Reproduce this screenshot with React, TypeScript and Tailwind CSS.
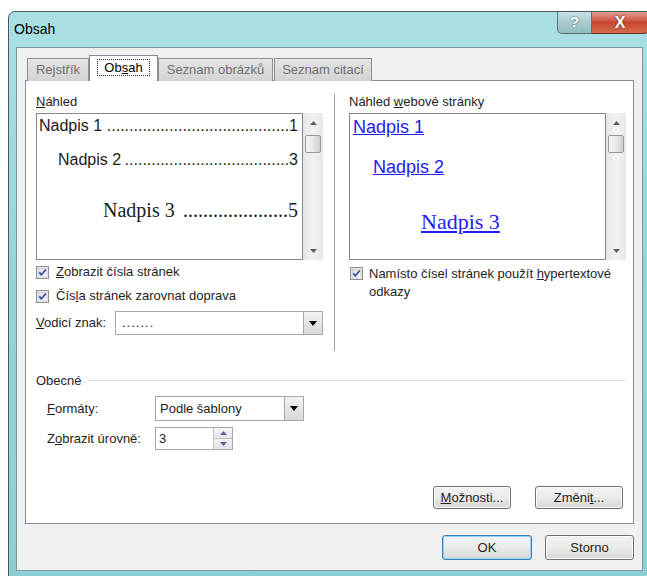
import type { ReactNode } from "react";

function Checkbox() {
  return (
    <svg width="13" height="13" viewBox="0 0 13 13" className="shrink-0">
      <defs>
        <linearGradient id="cbFill" x1="0" y1="0" x2="1" y2="1">
          <stop offset="0" stopColor="#dcdcdc" />
          <stop offset="1" stopColor="#fbfbfb" />
        </linearGradient>
      </defs>
      <rect x="0.5" y="0.5" width="12" height="12" fill="#f4f4f4" stroke="#8e8f8f" />
      <rect x="2" y="2" width="9" height="9" fill="url(#cbFill)" stroke="#b9bcc0" strokeWidth="0.6" />
      <path d="M3.3 6.4 L5.4 8.8 L9.8 3.4" fill="none" stroke="#2f47a0" strokeWidth="1.6" />
    </svg>
  );
}

function DropButton() {
  return (
    <div className="flex h-full w-[19px] items-center justify-center border-l border-[#a7a7a7] bg-gradient-to-b from-[#f3f3f3] to-[#d9d9d9]">
      <svg width="8" height="5" viewBox="0 0 8 5">
        <path d="M0 0 H8 L4 5 Z" fill="#000" />
      </svg>
    </div>
  );
}

function Arrow({ up }: { up?: boolean }) {
  return (
    <svg width="7" height="4" viewBox="0 0 7 4">
      <path d={up ? "M0 4 H7 L3.5 0 Z" : "M0 0 H7 L3.5 4 Z"} fill="#606060" />
    </svg>
  );
}

function ScrollBar() {
  return (
    <div className="flex w-[20px] flex-col items-center bg-gradient-to-r from-[#e6e6e6] via-[#f2f2f2] to-[#e8e8e8]">
      <div className="flex h-[20px] items-center justify-center">
        <Arrow up />
      </div>
      <div className="mt-[2px] h-[18px] w-[16px] rounded-[2px] border border-[#9a9a9a] bg-gradient-to-r from-[#f4f4f4] via-[#e8e8e8] to-[#cfcfcf]" />
      <div className="mt-auto flex h-[18px] items-center justify-center">
        <Arrow />
      </div>
    </div>
  );
}

// one line of the table of contents preview: title, dot leader, page number
function TocRow({ label, page, dots, className }: { label: string; page: string; dots: number; className: string }) {
  return (
    <div className={`flex items-baseline justify-between whitespace-nowrap text-[#1b1b1b] ${className}`}>
      <span>{label}</span>
      <span className="flex-1 text-right">{".".repeat(dots)}</span>
      <span>{page}</span>
    </div>
  );
}

function Button({ children, focused, className }: { children: ReactNode; focused?: boolean; className: string }) {
  return (
    <div
      className={`flex items-center justify-center rounded-[3px] border bg-gradient-to-b from-[#f2f2f2] via-[#ebebeb] to-[#d6d6d6] text-[13px] ${
        focused ? "border-[#3c7fb1] shadow-[inset_0_0_0_1px_#8ed4f5]" : "border-[#707070] shadow-[inset_0_0_0_1px_#fcfcfc]"
      } ${className}`}
    >
      {children}
    </div>
  );
}

export default function App() {
  return (
    <div className="h-[576px] w-[647px] overflow-hidden bg-white pl-[8px] pt-[11px] font-['Liberation_Sans',Arial,sans-serif] text-[13px] text-[#1e1e1e]">
      {/* window frame */}
      <div className="h-[566px] w-[648px] rounded-t-[7px] border border-[#475861] bg-gradient-to-b from-[#a9e0e3] via-[#93d4d8] to-[#8ccfd3]">
        {/* title bar */}
        <div className="flex h-[35px] items-start">
          <div className="pl-[5px] pt-[9px] text-[14px] leading-[16px] text-black">Obsah</div>
          <div className="ml-auto mr-[6px] flex h-[22px]">
            <div className="flex w-[35px] items-center justify-center rounded-bl-[5px] border border-t-0 border-[#5b7178] bg-gradient-to-b from-[#c6e2e4] via-[#a9cccf] to-[#8fbcc0] text-[15px] font-bold text-white [text-shadow:0_0_2px_#39494f]">
              ?
            </div>
            <div className="flex w-[57px] items-center justify-center rounded-br-[5px] border border-l-0 border-t-0 border-[#6a2f26] bg-gradient-to-b from-[#e4a093] via-[#c84530] to-[#d46b4e] text-[16px] font-bold text-white [text-shadow:0_0_2px_#3a1a14]">
              X
            </div>
          </div>
        </div>

        {/* client area */}
        <div className="ml-[7px] h-[524px] w-[627px] border border-[#7d959c] bg-[#f0f0f0] pl-[8px] pt-[7px]">
          {/* tabs */}
          <div className="relative z-10 flex h-[26px] items-end pl-[2px]">
            <div className="flex h-[23px] w-[62px] items-center justify-center border border-b-0 border-[#8e8f8f] bg-gradient-to-b from-[#e3e3e3] to-[#d3d3d3] text-[#707070]">
              Rejstřík
            </div>
            <div className="flex h-[26px] w-[69px] items-center justify-center border border-b-0 border-[#898c95] bg-white pb-[2px]">
              <span className="border border-dotted border-[#333] px-[6px] leading-[15px] text-black">
                Ob<u>s</u>ah
              </span>
            </div>
            <div className="flex h-[23px] w-[115px] items-center justify-center border border-b-0 border-[#8e8f8f] bg-gradient-to-b from-[#e3e3e3] to-[#d3d3d3] text-[#707070]">
              Seznam obrázků
            </div>
            <div className="ml-[1px] flex h-[23px] w-[98px] items-center justify-center border border-b-0 border-[#8e8f8f] bg-gradient-to-b from-[#e3e3e3] to-[#d3d3d3] text-[#707070]">
              Seznam citací
            </div>
          </div>

          {/* tab panel */}
          <div className="-mt-[1px] flex h-[444px] w-[609px] flex-col border border-[#898c95] bg-white">
            <div className="flex h-[270px] pt-[13px]">
              {/* left column */}
              <div className="ml-[10px] w-[287px]">
                <div className="leading-[16px]">
                  <u>N</u>áhled
                </div>
                <div className="mt-[3px] flex h-[147px]">
                  <div className="w-[267px] border border-[#828790] bg-white pl-[2px] pr-[4px] pt-[2px]">
                    <TocRow label="Nadpis 1" page="1" dots={41} className="text-[16px] leading-[20px]" />
                    <TocRow label="Nadpis 2" page="3" dots={37} className="mt-[14px] pl-[19px] text-[16px] leading-[20px]" />
                    <TocRow
                      label="Nadpis 3"
                      page="5"
                      dots={21}
                      className="mt-[28px] pl-[64px] font-['Liberation_Serif',serif] text-[20px] leading-[24px]"
                    />
                  </div>
                  <ScrollBar />
                </div>
                <div className="mt-[4px] flex h-[16px] items-center gap-[7px]">
                  <Checkbox />
                  <span>
                    <u>Z</u>obrazit čísla stránek
                  </span>
                </div>
                <div className="mt-[8px] flex h-[16px] items-center gap-[7px]">
                  <Checkbox />
                  <span>
                    Čís<u>l</u>a stránek zarovnat doprava
                  </span>
                </div>
                <div className="mt-[7px] flex items-center">
                  <span className="w-[79px]">
                    <u>V</u>odicí znak:
                  </span>
                  <div className="flex h-[24px] flex-1 items-center border border-[#a7a7a7] bg-white pl-[6px]">
                    <span className="flex-1 tracking-[1px]">.......</span>
                    <DropButton />
                  </div>
                </div>
              </div>

              {/* separator */}
              <div className="ml-[11px] mr-[13px] w-[2px] border-l border-r border-l-[#a0a0a0] border-r-white" />

              {/* right column */}
              <div className="w-[277px]">
                <div className="leading-[16px]">
                  Náhled <u>w</u>ebové stránky
                </div>
                <div className="mt-[3px] flex h-[147px]">
                  <div className="w-[257px] border border-[#828790] bg-white pt-[2px] text-[#2020f5]">
                    <div className="pl-[3px] text-[18px] leading-[22px]">
                      <u>Nadpis 1</u>
                    </div>
                    <div className="mt-[18px] pl-[23px] text-[18px] leading-[22px]">
                      <u>Nadpis 2</u>
                    </div>
                    <div className="mt-[31px] pl-[71px] font-['Liberation_Serif',serif] text-[22px] leading-[26px]">
                      <u>Nadpis 3</u>
                    </div>
                  </div>
                  <ScrollBar />
                </div>
                <div className="mt-[5px] flex items-start gap-[6px] pl-[1px]">
                  <div className="pt-[2px]">
                    <Checkbox />
                  </div>
                  <div className="leading-[18px]">
                    <div>
                      Namísto čísel stránek použít <u>h</u>ypertextové
                    </div>
                    <div>odkazy</div>
                  </div>
                </div>
              </div>
            </div>

            {/* general section */}
            <div className="ml-[10px] mr-[8px] mt-[22px] flex items-center gap-[6px]">
              <span className="leading-[16px]">Obecné</span>
              <div className="h-[2px] flex-1 border-b border-t border-b-white border-t-[#dcdcdc]" />
            </div>
            <div className="ml-[21px] mt-[7px] flex items-center">
              <span className="w-[108px]">
                <u>F</u>ormáty:
              </span>
              <div className="flex h-[25px] w-[149px] items-center border border-[#a7a7a7] bg-white pl-[4px]">
                <span className="flex-1">Podle šablony</span>
                <DropButton />
              </div>
            </div>
            <div className="ml-[21px] mt-[6px] flex items-center">
              <span className="w-[108px]">
                Z<u>o</u>brazit úrovně:
              </span>
              <div className="flex h-[23px] w-[78px] items-center border border-[#a7a7a7] bg-white pl-[3px]">
                <span className="flex-1">3</span>
                <div className="flex h-full w-[19px] flex-col border-l border-[#c4c4c4]">
                  <div className="flex flex-1 items-center justify-center border-b border-[#c4c4c4] bg-gradient-to-b from-[#f7f7f7] to-[#e6e6e6]">
                    <svg width="7" height="4" viewBox="0 0 7 4">
                      <path d="M0 4 H7 L3.5 0 Z" fill="#4b6a9b" />
                    </svg>
                  </div>
                  <div className="flex flex-1 items-center justify-center bg-gradient-to-b from-[#f2f2f2] to-[#e2e2e2]">
                    <svg width="7" height="4" viewBox="0 0 7 4">
                      <path d="M0 0 H7 L3.5 4 Z" fill="#4b6a9b" />
                    </svg>
                  </div>
                </div>
              </div>
            </div>

            <div className="mb-[14px] mr-[10px] mt-auto flex justify-end gap-[24px]">
              <Button className="h-[23px] w-[78px]">
                <span>
                  <u>M</u>ožnosti...
                </span>
              </Button>
              <Button className="h-[23px] w-[88px]">
                <span>
                  Změni<u>t</u>...
                </span>
              </Button>
            </div>
          </div>

          {/* dialog buttons */}
          <div className="mr-[7px] mt-[11px] flex w-[609px] justify-end gap-[13px]">
            <Button focused className="h-[25px] w-[90px]">
              OK
            </Button>
            <Button className="h-[25px] w-[89px]">Storno</Button>
          </div>
        </div>
      </div>
    </div>
  );
}
